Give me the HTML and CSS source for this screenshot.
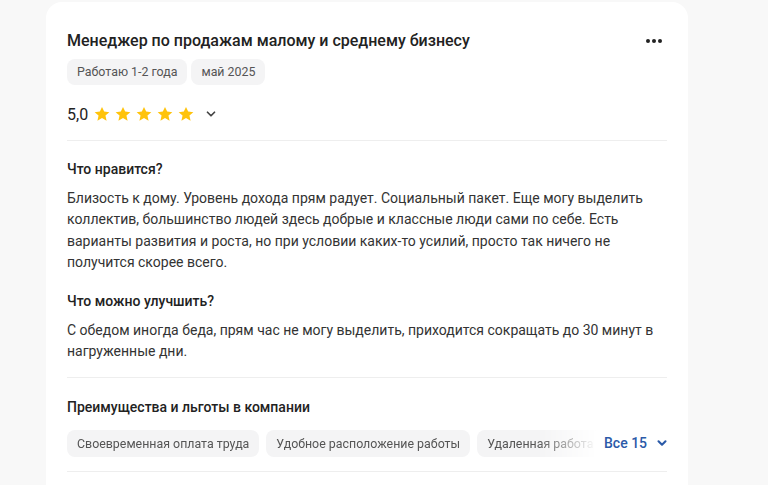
FILE: index.html
```html
<html>
<head>
    <title>Отзыв</title>
    <link rel="stylesheet" href="styles.css">
</head>
<body>
    <div class="card">
        <div class="head">
            <div class="title">Менеджер по продажам малому и среднему бизнесу</div>
            <div class="more"><span></span><span></span><span></span></div>
        </div>
        <div class="tags">
            <div class="tag">Работаю 1-2 года</div>
            <div class="tag">май 2025</div>
        </div>
        <div class="rating">
            <span class="score">5,0</span>
            <span class="stars">
                <svg viewBox="0 0 24 24"><path d="M12 2.5l2.9 6.3 6.9.7-5.2 4.6 1.5 6.8L12 17.4l-6.1 3.5 1.5-6.8-5.2-4.6 6.9-.7z"/></svg>
                <svg viewBox="0 0 24 24"><path d="M12 2.5l2.9 6.3 6.9.7-5.2 4.6 1.5 6.8L12 17.4l-6.1 3.5 1.5-6.8-5.2-4.6 6.9-.7z"/></svg>
                <svg viewBox="0 0 24 24"><path d="M12 2.5l2.9 6.3 6.9.7-5.2 4.6 1.5 6.8L12 17.4l-6.1 3.5 1.5-6.8-5.2-4.6 6.9-.7z"/></svg>
                <svg viewBox="0 0 24 24"><path d="M12 2.5l2.9 6.3 6.9.7-5.2 4.6 1.5 6.8L12 17.4l-6.1 3.5 1.5-6.8-5.2-4.6 6.9-.7z"/></svg>
                <svg viewBox="0 0 24 24"><path d="M12 2.5l2.9 6.3 6.9.7-5.2 4.6 1.5 6.8L12 17.4l-6.1 3.5 1.5-6.8-5.2-4.6 6.9-.7z"/></svg>
            </span>
            <svg class="chev" viewBox="0 0 12 12"><path d="M3 4.5l3 3 3-3"/></svg>
        </div>

        <div class="section">
            <div class="label">Что нравится?</div>
            <p class="text">Близость к дому. Уровень дохода прям радует. Социальный пакет. Еще могу выделить коллектив, большинство людей здесь добрые и классные люди сами по себе. Есть варианты развития и роста, но при условии каких-то усилий, просто так ничего не получится скорее всего.</p>
            <div class="label second">Что можно улучшить?</div>
            <p class="text">С обедом иногда беда, прям час не могу выделить, приходится сокращать до 30 минут в нагруженные дни.</p>
        </div>

        <div class="section perks">
            <div class="label">Преимущества и льготы в компании</div>
            <div class="perk-row">
                <div class="perk-list">
                    <div class="tag">Своевременная оплата труда</div>
                    <div class="tag">Удобное расположение работы</div>
                    <div class="tag">Удаленная работа</div>
                </div>
                <div class="all">Все 15 <svg class="chev blue" viewBox="0 0 12 12"><path d="M3 4.5l3 3 3-3"/></svg></div>
            </div>
        </div>
        <div class="bottom"></div>
    </div>
</body>
</html>
```

FILE: styles.css
```css
body {
    margin: 0;
    background-color: #f8f8f8;
    font-family: Roboto, "Noto Sans", sans-serif;
    color: #222;
}

.card {
    background-color: white;
    margin: 2px 0 0 46px;
    width: 642px;
    height: 520px;
    border-radius: 16px;
    padding: 28px 21px 0 21px;
    box-sizing: border-box;
}

.head {
    display: flex;
    align-items: center;
    justify-content: space-between;
}

.title {
    font-size: 16px;
    font-weight: 500;
    line-height: 22px;
}

.more {
    display: flex;
    gap: 2px;
    padding-right: 5px;
}

.more span {
    width: 4px;
    height: 4px;
    border-radius: 50%;
    background-color: #222;
}

.tags {
    display: flex;
    gap: 4px;
    margin-top: 7px;
}

.tag {
    background-color: #f4f4f5;
    border-radius: 8px;
    padding: 0 10px;
    height: 26px;
    line-height: 26px;
    font-size: 12.4px;
    color: #555;
    white-space: nowrap;
}

.rating {
    display: flex;
    align-items: center;
    margin-top: 16px;
    height: 26px;
}

.score {
    font-size: 16px;
    margin-right: 5px;
}

.stars {
    display: flex;
    gap: 3px;
}

.stars svg {
    width: 18px;
    height: 18px;
    fill: #ffc30b;
}

.chev {
    width: 14px;
    height: 14px;
    fill: none;
    stroke: #444;
    stroke-width: 1.5;
    stroke-linecap: round;
    stroke-linejoin: round;
    margin-left: 9px;
}

.section {
    border-top: 1px solid #eeeeee;
    margin-top: 13px;
    padding-top: 18px;
}

.label {
    font-size: 14px;
    font-weight: 500;
    line-height: 20px;
}

.label.second {
    margin-top: 18px;
}

.text {
    font-size: 14px;
    line-height: 21.3px;
    color: #333;
    margin: 9px 0 0 0;
    padding-right: 10px;
}

.perks {
    margin-top: 14px;
    padding-top: 19px;
}

.perk-row {
    display: flex;
    align-items: center;
    margin-top: 13px;
}

.perk-list {
    display: flex;
    flex-shrink: 0;
    gap: 7px;
    overflow: hidden;
    width: 530px;
    -webkit-mask-image: linear-gradient(to right, black 470px, transparent 530px);
    mask-image: linear-gradient(to right, black 470px, transparent 530px);
}

.perk-list .tag {
    height: 27px;
    line-height: 27px;
}

.all {
    display: flex;
    align-items: center;
    white-space: nowrap;
    font-size: 14px;
    font-weight: 500;
    color: #2b5aa8;
    margin-left: 7px;
}

.chev.blue {
    stroke: #2b5aa8;
    stroke-width: 1.8;
    margin-left: 8px;
}

.bottom {
    border-top: 1px solid #eeeeee;
    margin-top: 14px;
}
```
